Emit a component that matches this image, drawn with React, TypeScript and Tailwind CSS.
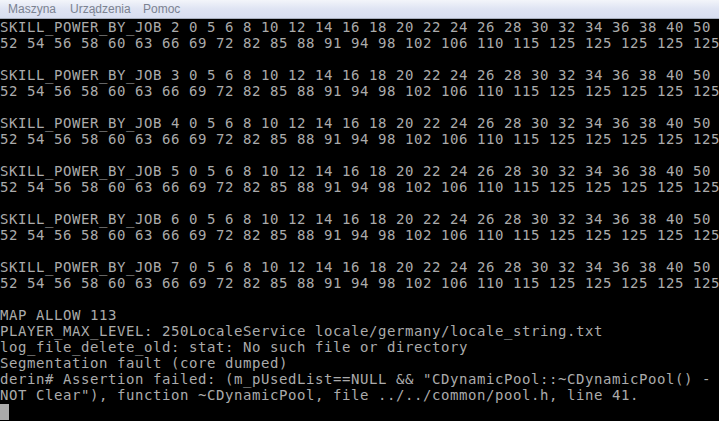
const nums1 = "0 5 6 8 10 12 14 16 18 20 22 24 26 28 30 32 34 36 38 40 50";
const nums2 =
  "52 54 56 58 60 63 66 69 72 82 85 88 91 94 98 102 106 110 115 125 125 125 125 125";

const jobs = [2, 3, 4, 5, 6, 7];

const tail = [
  "MAP ALLOW 113",
  "PLAYER_MAX_LEVEL: 250LocaleService locale/germany/locale_string.txt",
  "log_file_delete_old: stat: No such file or directory",
  "Segmentation fault (core dumped)",
  'derin# Assertion failed: (m_pUsedList==NULL && "CDynamicPool::~CDynamicPool() -',
  'NOT Clear"), function ~CDynamicPool, file ../../common/pool.h, line 41.',
];

function Row({ text }: { text: string }) {
  return <div className="h-[16px] whitespace-pre">{text}</div>;
}

export default function App() {
  const lines: string[] = [];
  jobs.forEach((j) => {
    lines.push(`SKILL_POWER_BY_JOB ${j} ${nums1}`);
    lines.push(nums2);
    lines.push("");
  });
  lines.push(...tail);

  return (
    <div className="w-[719px] h-[421px] overflow-hidden bg-black flex flex-col">
      {/* menu bar */}
      <div className="h-[19px] shrink-0 flex items-center pl-[8px] bg-gradient-to-b from-[#f3f5fa] via-[#dfe4f3] to-[#d8def0] border-b border-[#a7aebd] text-[12px] leading-none text-[#7b8291] font-['Liberation_Sans',sans-serif]">
        <span className="w-[62px]">Maszyna</span>
        <span className="w-[73px]">Urządzenia</span>
        <span>Pomoc</span>
      </div>

      {/* console */}
      <div className="flex-1 overflow-hidden text-[#ababab] text-[14px] leading-[16px] tracking-[0.57px] font-['DejaVu_Sans_Mono',monospace]">
        {lines.map((l, i) => (
          <Row key={i} text={l} />
        ))}
        <div className="h-[16px] pt-px">
          <div className="w-[9px] h-[16px] bg-[#ababab]" />
        </div>
      </div>
    </div>
  );
}
